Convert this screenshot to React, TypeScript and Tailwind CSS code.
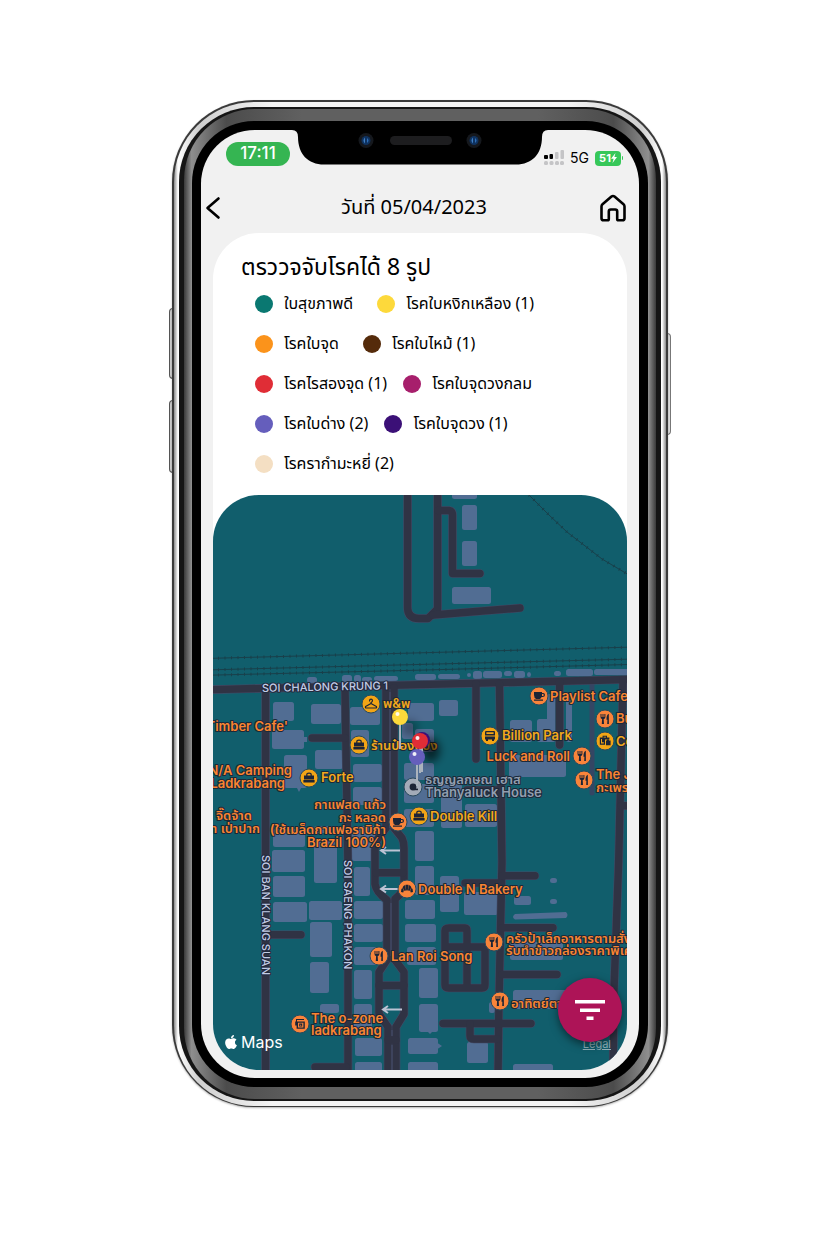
import React from "react";

type Box = [number, number, number, number];
type Glyph = "fork" | "cup" | "bag" | "hanger" | "bus" | "suitcase" | "croissant" | "drink" | "dot";

const LATIN = "font-['Inter','Noto_Sans_Thai','Noto_Sans',sans-serif]";
const UI = "font-['Noto_Sans_Thai','Noto_Sans',sans-serif]";

const legend: { name: string; count?: number; dot: string }[][] = [
  [
    { name: "ใบสุขภาพดี", dot: "bg-[#0a7871]" },
    { name: "โรคใบหงิกเหลือง", count: 1, dot: "bg-[#fdd93b]" },
  ],
  [
    { name: "โรคใบจุด", dot: "bg-[#fb931b]" },
    { name: "โรคใบไหม้", count: 1, dot: "bg-[#552b0b]" },
  ],
  [
    { name: "โรคไรสองจุด", count: 1, dot: "bg-[#e02d36]" },
    { name: "โรคใบจุดวงกลม", dot: "bg-[#a71f6c]" },
  ],
  [
    { name: "โรคใบด่าง", count: 2, dot: "bg-[#655ebc]" },
    { name: "โรคใบจุดวง", count: 1, dot: "bg-[#3b1077]" },
  ],
  [{ name: "โรครากำมะหยี่", count: 2, dot: "bg-[#f4dfc3]" }],
];

// x, y, right, bottom
const buildings: Box[] = [
  [452, 490, 477, 499], [462, 505, 477, 530], [462, 541, 477, 566], [452, 587, 491, 604],
  [307, 677, 317, 683], [342, 675, 352, 682], [354, 675, 361, 682], [362, 677, 372, 682],
  [374, 676, 398, 681], [415, 674, 436, 680], [438, 674, 460, 679], [467, 673, 471, 677],
  [473, 671, 482, 679], [483, 671, 502, 678], [504, 671, 512, 676], [514, 671, 525, 678],
  [527, 672, 531, 677], [554, 671, 561, 676], [566, 669, 593, 676], [594, 669, 630, 675],
  [273, 702, 294, 721], [311, 704, 341, 724], [272, 730, 304, 749], [315, 750, 343, 769],
  [284, 755, 307, 788], [350, 707, 380, 725], [351, 730, 369, 757], [353, 764, 382, 782],
  [353, 787, 382, 805], [352, 826, 375, 861], [273, 829, 305, 847], [314, 826, 336, 833],
  [272, 850, 305, 872], [273, 876, 305, 897], [273, 902, 307, 922], [314, 840, 337, 883],
  [309, 901, 342, 920], [310, 922, 332, 957], [310, 962, 329, 993], [320, 1004, 339, 1013],
  [354, 867, 370, 896], [354, 901, 383, 919], [354, 924, 383, 942], [354, 947, 383, 965],
  [354, 970, 372, 999], [354, 1004, 372, 1030], [355, 1038, 382, 1056], [355, 1062, 382, 1074],
  [408, 703, 434, 721], [402, 723, 413, 739], [439, 700, 458, 716], [415, 729, 434, 752],
  [404, 763, 434, 780], [404, 784, 434, 803], [404, 809, 434, 827], [441, 784, 462, 828],
  [465, 804, 497, 827], [415, 831, 434, 861], [415, 866, 434, 895], [440, 876, 459, 912],
  [464, 892, 498, 915], [405, 900, 435, 919], [405, 924, 436, 942], [407, 947, 436, 965],
  [419, 968, 438, 998], [419, 1004, 438, 1032], [408, 1038, 438, 1054], [408, 1062, 438, 1074],
  [467, 1042, 488, 1063], [489, 1002, 495, 1013], [510, 720, 532, 742], [509, 755, 566, 777],
  [547, 694, 555, 742], [537, 719, 555, 742], [566, 700, 572, 742], [514, 896, 531, 905],
  [550, 878, 557, 883], [550, 899, 557, 904], [510, 942, 563, 960], [513, 990, 567, 1009],
  [513, 1064, 553, 1074],
];

const roads: string[] = [
  "M407.6 490V608Q408 618.5 419 618.5H428L437.6 609V490",
  "M438 510.5H449Q452.5 511 452.5 515V573.5H480",
  "M433 615L520 608",
  "M205 689.8L420 684.6L635 679.3",
  "M265.6 690V1075",
  "M345 688L348 865V1075",
  "M315 1067H346",
  "M312 738H345",
  "M268 934.7H301",
  "M386 688V828L377 840Q375 845 375 850V884Q376 892 387 900V960L379 972V1014L388 1027V1075",
  "M394 688V828L402 838Q404 842 404 848V884Q404 892 395 899V960L404 972V1014L396 1027V1075",
  "M376 872.7H403",
  "M379 985.5H404",
  "M388 1040H396",
  "M476 684V759",
  "M499.5 684L502 862L499 1000L498 1075",
  "M559.6 682V745",
  "M623 680L618.7 860L614 990L613 1075",
  "M621 805.7H634",
  "M467 790H500",
  "M502 875.7H535",
  "M465 883H500",
  "M502 927.7H553",
  "M502 974.5H557",
  "M443 1023.5H531",
  "M470 1024V1036Q470 1039 474 1039H497",
  "M449 928H465Q467 928 467 931V988M445 931Q445 928 449 928M445 931V985Q445 988 449 988H482Q485 988 485 985V947H447",
];

const rails: string[] = [
  "M205 658.5L425 652.7L635 647",
  "M205 670L425 664.3L635 659",
  "M205 675.3L425 670L635 664.3",
  "M529 495L549 515L567 532L602 559L634 578",
];

const pois: { x: number; y: number; glyph: Glyph; tone: string }[] = [
  { x: 371, y: 704, glyph: "hanger", tone: "fill-[#f2a516]" },
  { x: 359, y: 745, glyph: "bag", tone: "fill-[#f2a516]" },
  { x: 309, y: 778, glyph: "bag", tone: "fill-[#f2a516]" },
  { x: 419, y: 816, glyph: "bag", tone: "fill-[#f2a516]" },
  { x: 490, y: 736, glyph: "bus", tone: "fill-[#f2a516]" },
  { x: 605, y: 741, glyph: "suitcase", tone: "fill-[#f2a516]" },
  { x: 398, y: 822, glyph: "cup", tone: "fill-[#f9843a]" },
  { x: 539, y: 696, glyph: "cup", tone: "fill-[#f9843a]" },
  { x: 605, y: 719, glyph: "fork", tone: "fill-[#f9843a]" },
  { x: 582, y: 756, glyph: "fork", tone: "fill-[#f9843a]" },
  { x: 584, y: 780, glyph: "fork", tone: "fill-[#f9843a]" },
  { x: 379, y: 956, glyph: "fork", tone: "fill-[#f9843a]" },
  { x: 494, y: 942, glyph: "fork", tone: "fill-[#f9843a]" },
  { x: 500, y: 1001, glyph: "fork", tone: "fill-[#f9843a]" },
  { x: 407, y: 889, glyph: "croissant", tone: "fill-[#f9843a]" },
  { x: 300, y: 1024, glyph: "drink", tone: "fill-[#f9843a]" },
  { x: 413, y: 787, glyph: "dot", tone: "fill-[#a3abb8]" },
];

const ORANGE = "fill-[#f98531]";
const YELLOW = "fill-[#f2a91c]";
const GREY = "fill-[#929fb0]";

const labels: { x: number; y: number; text: string; tone: string; end?: boolean }[] = [
  { x: 383, y: 708, text: "พ&พ", tone: YELLOW },
  { x: 371, y: 750, text: "ร้านป๋องแป๋ง", tone: YELLOW },
  { x: 321, y: 782, text: "Forte", tone: YELLOW },
  { x: 430, y: 821, text: "Double Kill", tone: YELLOW },
  { x: 502, y: 740, text: "Billion Park", tone: YELLOW },
  { x: 616, y: 746, text: "Co", tone: YELLOW },
  { x: 425, y: 784, text: "ธญญลกษณ เฮาส", tone: GREY },
  { x: 425, y: 797, text: "Thanyaluck House", tone: GREY },
  { x: 550, y: 701, text: "Playlist Cafe", tone: ORANGE },
  { x: 616, y: 723, text: "Bu", tone: ORANGE },
  { x: 570, y: 761, text: "Luck and Roll", tone: ORANGE, end: true },
  { x: 596, y: 779, text: "The J", tone: ORANGE },
  { x: 596, y: 792, text: "กะเพรา", tone: ORANGE },
  { x: 288, y: 731, text: "Timber Cafe'", tone: ORANGE, end: true },
  { x: 292, y: 775, text: "N/A Camping", tone: ORANGE, end: true },
  { x: 285, y: 788, text: "Ladkrabang", tone: ORANGE, end: true },
  { x: 252, y: 820, text: "จิ๊ดจ้าด", tone: ORANGE, end: true },
  { x: 260, y: 833, text: "า เป่าปาก", tone: ORANGE, end: true },
  { x: 386, y: 809, text: "กาแฟสด แก้ว", tone: ORANGE, end: true },
  { x: 386, y: 822, text: "กะ หลอด", tone: ORANGE, end: true },
  { x: 386, y: 834, text: "(ใช้เมล็ดกาแฟอราบิก้า", tone: ORANGE, end: true },
  { x: 386, y: 847, text: "Brazil 100%)", tone: ORANGE, end: true },
  { x: 418, y: 894, text: "Double N Bakery", tone: ORANGE },
  { x: 391, y: 961, text: "Lan Roi Song", tone: ORANGE },
  { x: 506, y: 943, text: "ครัวป้าเล็กอาหารตามสั่ง", tone: ORANGE },
  { x: 506, y: 955, text: "รับทำข้าวกล่องราคาพิเศษ", tone: ORANGE },
  { x: 511, y: 1008, text: "อาทิตย์ตาม", tone: ORANGE },
  { x: 311, y: 1023, text: "The o-zone", tone: ORANGE },
  { x: 311, y: 1035, text: "ladkrabang", tone: ORANGE },
];

function GlyphShape({ glyph }: { glyph: Glyph }) {
  switch (glyph) {
    case "fork":
      return (
        <g>
          <path d="M-4.5-5V-2Q-4.5 0-2.9 0L-3.2 5H-1L-1.3 0Q.4 0 .4-2V-5H-.6V-2H-1.5V-5H-2.5V-2H-3.5V-5Z" />
          <path d="M3.8-5.2Q1.3-4 1.5.8H2.4L2.2 5H3.9Z" />
        </g>
      );
    case "cup":
      return (
        <path
          fillRule="evenodd"
          d="M-5-4H3V-3H4.2Q6-3 6-1T3.6 1H2.6Q2 2.6.8 3H-2.8Q-5 2-5-1ZM3-2V0H3.8Q4.8 0 4.8-1T3.8-2ZM-5 3.6H4V4.8H-5Z"
        />
      );
    case "bag":
      return (
        <path
          fillRule="evenodd"
          d="M-2.8-2.4V-3.4Q-2.8-5.4 0-5.4T2.8-3.4V-2.4H5V1.4H-5V-2.4ZM-1.6-2.4H1.6V-3.3Q1.6-4.2 0-4.2T-1.6-3.3ZM-5.6 2H5.6V4.4H-5.6Z"
        />
      );
    case "hanger":
      return (
        <path
          className="fill-none stroke-[#1c2436] stroke-[1.2]"
          strokeLinecap="round"
          strokeLinejoin="round"
          d="M-1.5-3Q-1.4-4.8 0-4.8T1.5-3.2Q1.4-2 0-1.4V-.4L5.4 2.6Q6 4 4.6 4H-4.6Q-6 4-5.4 2.6L0-.4"
        />
      );
    case "bus":
      return (
        <path
          fillRule="evenodd"
          d="M-4-5H4Q5-5 5-3.6V-.4H-5V-3.6Q-5-5-4-5ZM-3.6-3.8V-2H3.6V-3.8ZM-5 .6H5V3.4H4V5H2V3.4H-2V5H-4V3.4H-5Z"
        />
      );
    case "suitcase":
      return (
        <path
          fillRule="evenodd"
          d="M-2.4-3.4V-5.2H2V-3.4H4.4V-1.4H0V3.8H-5.2V-3.4ZM-1.4-3.4H1V-4.2H-1.4ZM1-.4H2V-1.2H4V-.4H5.6V4.2H1ZM-4-2V2.4H-1.2V1.2H-3V-2Z"
        />
      );
    case "croissant":
      return (
        <path d="M-6 3Q-6-.4-4.6-1.2L-3.2 1.8-3.8 3.4ZM-4.4-1.8Q-3.4-3.8-1.8-4L-1 1.6-2.8 1.8ZM-1.4-4.2H1.4L.8 1.6H-.8ZM1.8-4Q3.4-3.8 4.4-1.8L2.8 1.8 1 1.6ZM4.6-1.2Q6-.4 6 3L3.8 3.4 3.2 1.8Z" />
      );
    case "drink":
      return (
        <path
          fillRule="evenodd"
          d="M-4-5H4V-4H-3V-2.6H4.8V4.8H-3.4V1.6H-4.8V-2.6H-4ZM-2-1.2V3.4H3.4V-1.2ZM-.8-.4H2.2V2.4H-.8ZM.2.4L1.6 1.2.2 2Z"
        />
      );
    default:
      return (
        <g>
          <circle r="3.4" />
          <path d="M1 1.6H5V3.2H1Z" />
        </g>
      );
  }
}

function Pin({ x, y, tip, tone }: { x: number; y: number; tip: number; tone: string }) {
  return (
    <g>
      <path className="stroke-[#aab3bd] stroke-2" d={`M${x} ${y}V${tip}`} />
      <circle className={tone} cx={x} cy={y} r="8" />
      <circle className="fill-white/90" cx={x - 2.5} cy={y - 3} r="2" />
    </g>
  );
}

function MapDrawing() {
  return (
    <svg
      className="block w-full bg-[#115e6c]"
      viewBox="213 495 414 575"
      role="img"
      aria-label="แผนที่"
    >
      <defs>
        <filter id="soft" x="-100%" y="-100%" width="300%" height="300%">
          <feGaussianBlur stdDeviation="4" />
        </filter>
      </defs>
      <g className="fill-[#516d93]">
        {buildings.map(([x, y, r, b]) => (
          <rect key={`${x}-${y}`} x={x} y={y} width={r - x} height={b - y} rx="2.5" />
        ))}
        <path d="M515 914L566 912Q569 915 566 918L515 919.5Q511 917 515 914ZM436 1042L442 1046 436 1050ZM426 1030H434L430 1034ZM296 786H302L299 792ZM302 737H307V742H302Z" />
      </g>
      <g className="fill-none stroke-[#19404b] stroke-1">
        {rails.map((d) => (
          <g key={d}>
            <path d={d} />
            <path d={d} className="stroke-[3]" strokeDasharray="1 5.5" />
          </g>
        ))}
      </g>
      <path className="fill-none stroke-[#344664] stroke-[5]" strokeLinecap="round" d="M592 682V793" />
      <g className="fill-none stroke-[#424a66]" strokeLinecap="round" strokeLinejoin="round" strokeWidth="8.6">
        {roads.map((d) => (
          <path key={d} d={d} />
        ))}
      </g>
      <g className="fill-none stroke-[#303344]" strokeLinecap="round" strokeLinejoin="round" strokeWidth="7.4">
        {roads.map((d) => (
          <path key={d} d={d} />
        ))}
      </g>
      <path className="stroke-[#474f6c] stroke-1" d="M390 692V828M391 903V956M392 1030V1036M392 1045V1070" />
      <path
        className="fill-none stroke-[#bcc3d4] stroke-2"
        d="M400 850.5H381M386 847L381 850.5 386 854M401 889H381M386 885.5L381 889 386 892.5M402 1009.5H383M388 1006L383 1009.5 388 1013"
      />
      <g
        className={`${LATIN} fill-[#c3cce6] stroke-[#20293c] stroke-2 text-[11px] font-medium`}
        style={{ paintOrder: "stroke" }}
        strokeLinejoin="round"
      >
        <text x="262" y="692" transform="rotate(-1.2 262 692)">SOI CHALONG KRUNG 1</text>
        <text transform="translate(262 855) rotate(90)">SOI BAN KLANG SUAN</text>
        <text transform="translate(344 860) rotate(90)">SOI SAENG PHAKON</text>
      </g>
      {pois.map((p) => (
        <g key={`${p.x}-${p.y}`} transform={`translate(${p.x} ${p.y})`} className="fill-[#1c2436]">
          <circle className={`${p.tone} stroke-[#2b4a5c] stroke-1`} r="9" />
          <GlyphShape glyph={p.glyph} />
        </g>
      ))}
      <g
        className={`${LATIN} stroke-[#1c2838] stroke-2 text-[13px] font-semibold`}
        style={{ paintOrder: "stroke" }}
        strokeLinejoin="round"
      >
        {labels.map((l) => (
          <text key={l.text} x={l.x} y={l.y} className={l.tone} textAnchor={l.end ? "end" : "start"}>
            {l.text}
          </text>
        ))}
      </g>
      <ellipse className="fill-black/60" cx="431" cy="750" rx="9" ry="12" filter="url(#soft)" />
      <ellipse className="fill-black/30" cx="410" cy="728" rx="8" ry="8" filter="url(#soft)" />
      <Pin x={400} y={717} tip={749} tone="fill-[#fdd93b]" />
      <Pin x={422} y={740} tip={772} tone="fill-[#3b1077]" />
      <Pin x={420} y={741} tip={773} tone="fill-[#e02d36]" />
      <Pin x={417} y={757} tip={786} tone="fill-[#655ebc]" />
    </svg>
  );
}

function AppleMark() {
  return (
    <svg className="h-4 w-3 fill-current" viewBox="0 0 384 512" aria-hidden="true">
      <path d="M318.7 268.7c-.2-36.7 16.4-64.4 50-84.8-18.8-26.9-47.2-41.7-84.7-44.6-35.5-2.8-74.3 20.7-88.5 20.7-15 0-49.4-19.7-76.4-19.7C63.3 141.2 4 184.8 4 273.5q0 39.3 14.4 81.2c12.8 36.7 59 126.7 107.2 125.2 25.2-.6 43-17.9 75.8-17.9 31.8 0 48.3 17.9 76.4 17.9 48.6-.7 90.4-82.5 102.6-119.3-65.2-30.7-61.7-90-61.7-91.9zm-56.6-164.2c27.3-32.4 24.8-61.9 24-72.5-24.1 1.4-52 16.4-67.9 34.9-17.5 19.8-27.8 44.3-25.6 71.9 26.1 2 49.9-11.4 69.5-34.3z" />
    </svg>
  );
}

function Notch() {
  return (
    <div className="absolute inset-x-0 -top-px flex justify-center">
      <svg className="h-9 w-64" viewBox="0 0 256 36" aria-hidden="true">
        <path d="M0 0H256V1Q250 1 250 8C250 25 240 35.5 224 35.5H32C16 35.5 6 25 6 8Q6 1 0 1Z" />
        <rect x="98" y="7" width="62" height="9" rx="4.5" className="fill-[#1d1d1f]" />
        {[74, 182].map((x) => (
          <g key={x}>
            <circle cx={x} cy="11.5" r="7.5" className="fill-[#15181d]" />
            <circle cx={x} cy="11.5" r="4.5" className="fill-[#0f325f]" />
            <path d={`M${x - 1} 8.5Q${x - 4} 11.5 ${x - 1} 14.5Z`} className="fill-[#3f7fc4]" />
            <path d={`M${x + 1} 9Q${x + 4} 11.5 ${x + 1} 14Z`} className="fill-[#2f6fb8]" />
          </g>
        ))}
      </svg>
    </div>
  );
}

function StatusBar() {
  return (
    <div className={`${LATIN} flex h-12 items-center justify-between pr-4 pl-[25px]`}>
      <span className="flex h-6 w-16 items-center justify-center rounded-full bg-[#35b552] text-[17px] font-medium text-white">
        17:11
      </span>
      <div className="flex items-center gap-1.5 pt-2">
        <svg className="h-4 w-5" viewBox="0 0 20 16" aria-hidden="true">
          <g className="fill-black">
            <rect x="0" y="5" width="4" height="4" rx="1" />
            <rect x="5.5" y="4" width="3.5" height="5" rx="1" />
          </g>
          <g className="fill-[#c4c4c6]">
            <rect x="11" y="2" width="3.5" height="7" rx="1" />
            <rect x="16.5" y="0" width="3.5" height="9" rx="1" />
            <rect x="0" y="11" width="4" height="4" rx="1.5" />
            <rect x="5.5" y="11" width="4" height="4" rx="1.5" />
            <rect x="11" y="11" width="4" height="4" rx="1.5" />
            <rect x="16" y="11" width="4" height="4" rx="1.5" />
          </g>
        </svg>
        <span className="text-sm">5G</span>
        <span className="flex items-center gap-px">
          <span className="flex h-[15px] w-[26px] items-center justify-center rounded bg-[#37c759] text-[11px] font-bold text-white">
            51
            <svg className="h-2.5 w-1.5 fill-white" viewBox="0 0 6 10" aria-hidden="true">
              <path d="M4.5 0L0 5.8H2.6L1.5 10L6 4H3.4Z" />
            </svg>
          </span>
          <span className="h-1 w-px rounded-r bg-[#37c759]" />
        </span>
      </div>
    </div>
  );
}

function TopBar() {
  return (
    <header className="flex h-[55px] items-center justify-between pt-1 pr-3 pl-1">
      <button type="button" aria-label="ย้อนกลับ" className="flex w-6">
        <svg
          className="h-6 w-4 fill-none stroke-black stroke-[2.6]"
          viewBox="0 0 16 24"
          strokeLinecap="round"
          strokeLinejoin="round"
        >
          <path d="M13.5 2.5L2.5 12L13.5 21.5" />
        </svg>
      </button>
      <h1 className="text-xl font-normal">วันที่ 05/04/2023</h1>
      <button type="button" aria-label="หน้าหลัก">
        <svg className="size-7 fill-none stroke-black stroke-[2.6]" viewBox="0 0 28 28" strokeLinejoin="round">
          <path d="M2.5 12.5Q2.5 11.2 3.5 10.3L12.5 2.6Q14 1.4 15.5 2.6L24.5 10.3Q25.500 11.2 25.5 12.5V24.2Q25.5 26.3 23.4 26.3H19.5Q18.2 26.3 18.2 25V17.5Q18.2 15.5 16.2 15.5H11.8Q9.8 15.5 9.8 17.5V25Q9.8 26.3 8.5 26.3H4.6Q2.5 26.3 2.5 24.2Z" />
        </svg>
      </button>
    </header>
  );
}

function Legend() {
  return (
    <section className="px-7 pt-[19px] pb-[11px]">
      <h2 className="h-8 text-[23px] leading-8 font-normal whitespace-nowrap">ตรววจจับโรคได้ 8 รูป</h2>
      <ul className="pl-3.5">
        {legend.map((row) => (
          <li key={row[0].name} className="flex h-10 items-center gap-4">
            {row.map((item) => (
              <span key={item.name} className="flex items-center gap-[11px] whitespace-nowrap">
                <span className={`size-[18px] rounded-full ${item.dot}`} />
                <span className={`text-base leading-6 ${item.count ? "" : "pr-2"}`}>
                  {item.count ? `${item.name} (${item.count})` : item.name}
                </span>
              </span>
            ))}
          </li>
        ))}
      </ul>
    </section>
  );
}

function MapPanel() {
  return (
    <section className="relative overflow-hidden rounded-[46px]">
      <MapDrawing />
      <div className={`${LATIN} absolute bottom-4 left-3 flex items-center gap-1 text-white`}>
        <AppleMark />
        <span className="text-base leading-6">Maps</span>
      </div>
      <a href="#legal" className={`${LATIN} absolute right-4 bottom-4 text-[11px] leading-5 text-[#8fb0b8] underline`}>
        Legal
      </a>
      <button
        type="button"
        aria-label="ตัวกรอง"
        className="absolute right-[5px] bottom-7 flex size-16 items-center justify-center rounded-full bg-[#ad1457] shadow-[0_3px_8px_rgba(0,0,0,0.5)]"
      >
        <svg className="h-5 w-8 fill-white" viewBox="0 0 32 20" aria-hidden="true">
          <path d="M1 0H31V3.5H1ZM6 8.5H26V12H6ZM12.5 16.5H19.5V20H12.5Z" />
        </svg>
      </button>
    </section>
  );
}

export default function App() {
  return (
    <main className={`${UI} flex min-h-screen justify-center bg-white pt-25 pb-32 text-black`}>
      <div className="relative w-full max-w-[496px]">
        <span className="absolute top-[208px] -left-[3px] h-[71px] w-1 rounded-l border border-[#555] bg-[#ccc]" />
        <span className="absolute top-[300px] -left-[3px] h-[73px] w-1 rounded-l border border-[#555] bg-[#ccc]" />
        <span className="absolute top-[233px] -right-[3px] h-[102px] w-1 rounded-r border border-[#777] bg-[#ddd]" />
        <div className="relative rounded-[82px] bg-[#3a3a3a] px-0.5 pt-0.5 pb-px shadow-[0_1px_2px_rgba(0,0,0,0.3)]">
          <div className="rounded-[80px] bg-[linear-gradient(90deg,#8a8a8a,#ffffff_0.8%,#cfcfcf_5%,#f4f4f4_20%,#f4f4f4_80%,#cfcfcf_95%,#ffffff_99.2%,#8a8a8a)] p-[5px]">
            <div className="rounded-[75px] bg-[#151515] px-[5px] py-0.5">
              <div className="rounded-[71px] bg-[linear-gradient(90deg,#3a3a3a,#8e8e8e_1.6%,#4c4c4c_9%,#606060_25%,#606060_75%,#4c4c4c_91%,#8e8e8e_98.4%,#3a3a3a)] px-2 py-3">
                <div className="rounded-[62px] bg-black p-[9px]">
                  <div className="relative rounded-[54px] bg-[#f1f1f1]">
                    <Notch />
                    <StatusBar />
                    <TopBar />
                    <div className="px-3 pb-2">
                      <div className="rounded-[46px] bg-white">
                        <Legend />
                        <MapPanel />
                      </div>
                    </div>
                  </div>
                </div>
              </div>
            </div>
          </div>
        </div>
      </div>
    </main>
  );
}
